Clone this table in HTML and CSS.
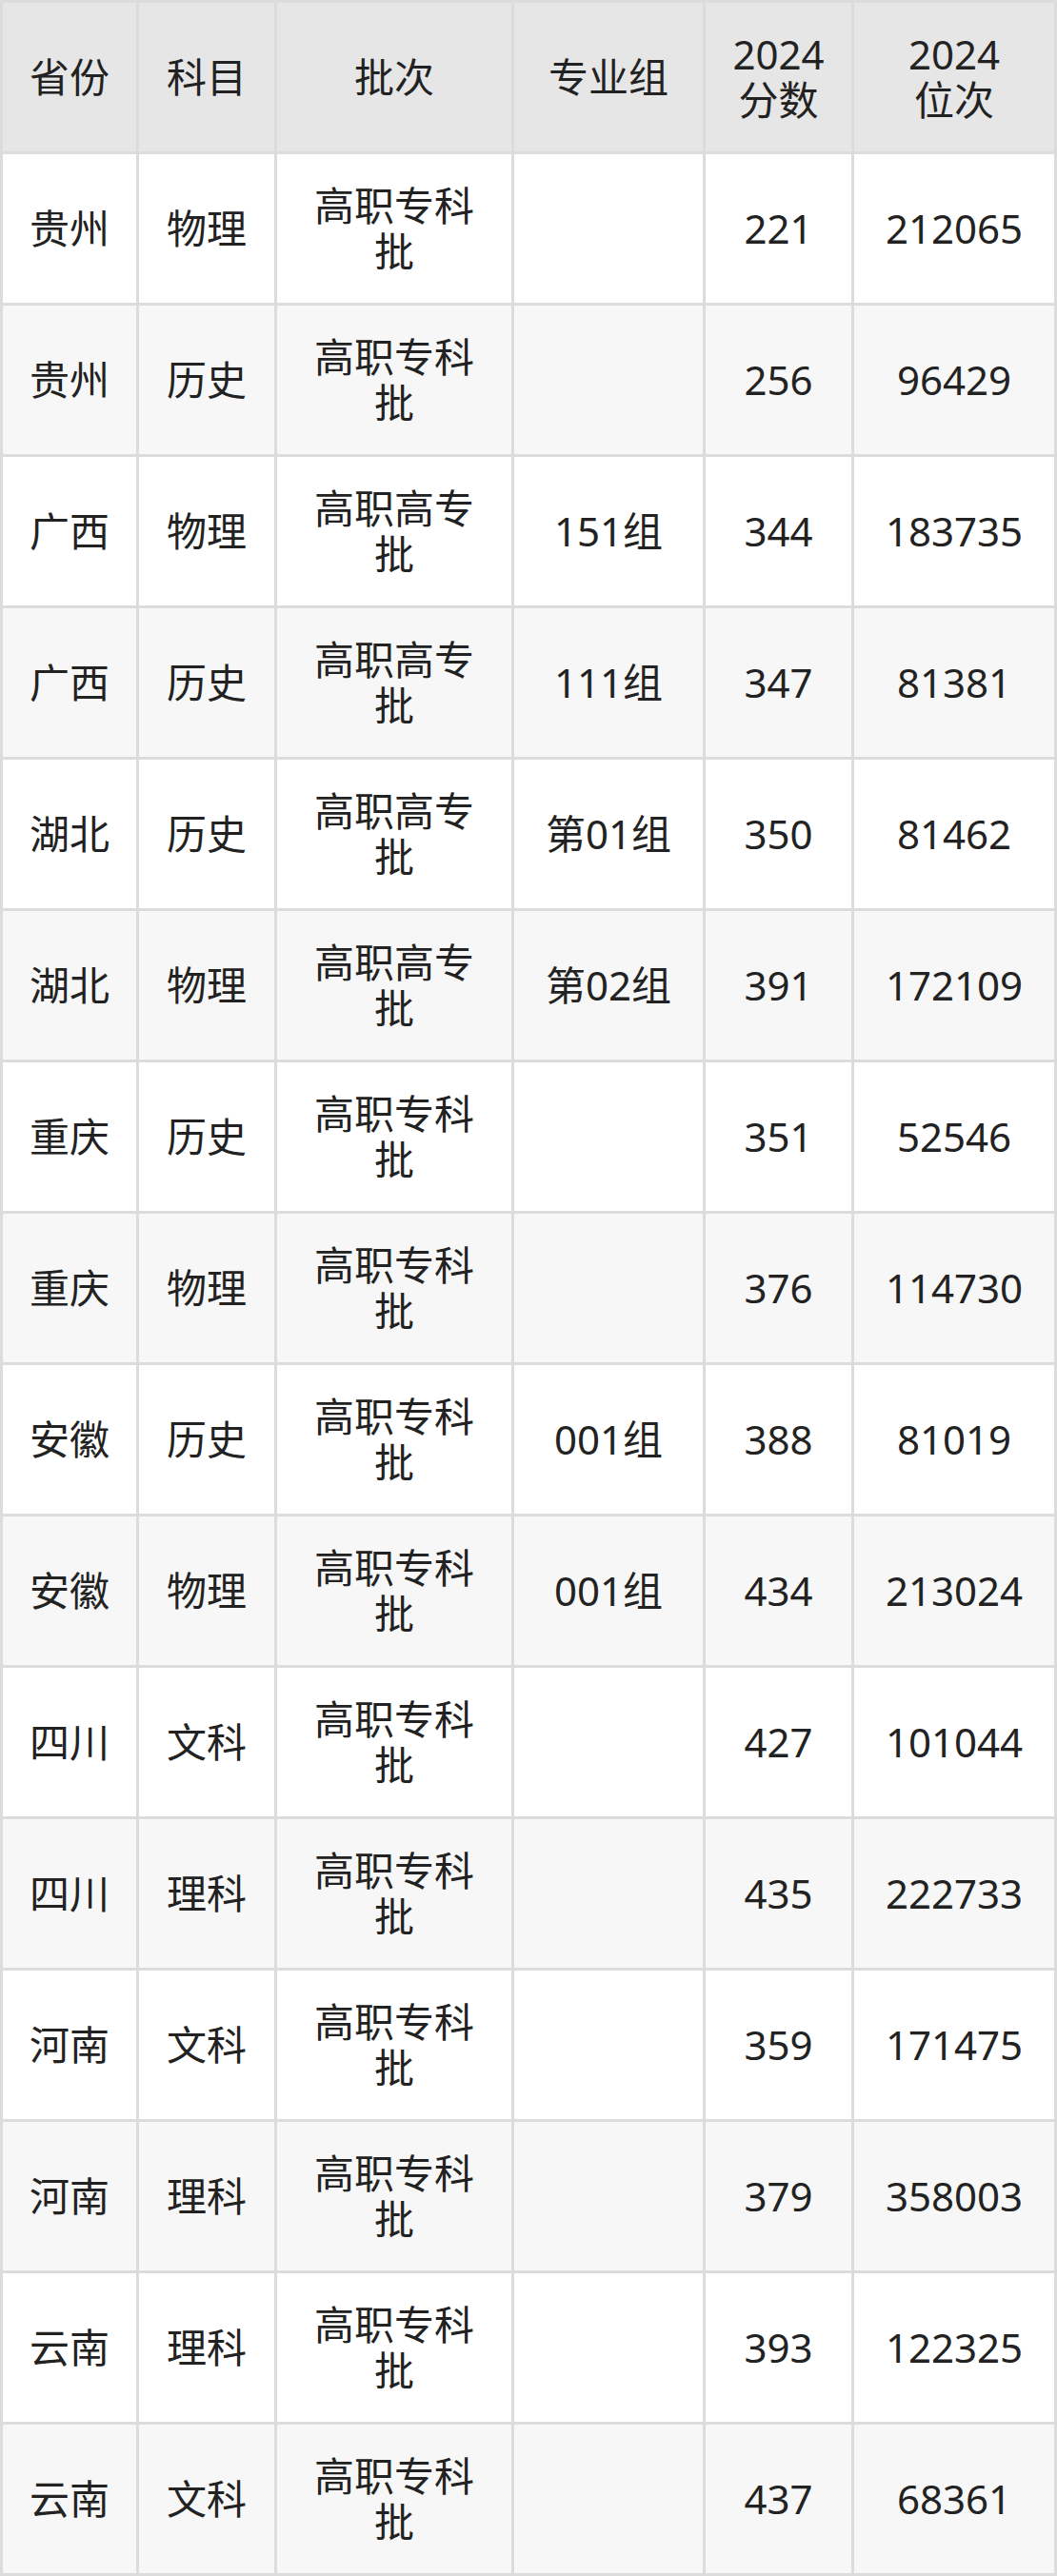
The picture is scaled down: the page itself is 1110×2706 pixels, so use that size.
FILE: index.html
```html
<!DOCTYPE html>
<html lang="zh-CN">
<head>
<meta charset="utf-8">
<title>2024 高职专科批分数</title>
<link rel="stylesheet" href="styles.css">
</head>
<body>
<div class="sheet">
  <div class="cell head">省份</div><div class="cell head">科目</div><div class="cell head">批次</div><div class="cell head">专业组</div><div class="cell head"><span class="stack">2024分数</span></div><div class="cell head"><span class="stack">2024位次</span></div>

  <div class="cell">贵州</div><div class="cell">物理</div><div class="cell">高职专科批</div><div class="cell"></div><div class="cell">221</div><div class="cell">212065</div>
  <div class="cell alt">贵州</div><div class="cell alt">历史</div><div class="cell alt">高职专科批</div><div class="cell alt"></div><div class="cell alt">256</div><div class="cell alt">96429</div>
  <div class="cell">广西</div><div class="cell">物理</div><div class="cell">高职高专批</div><div class="cell">151组</div><div class="cell">344</div><div class="cell">183735</div>
  <div class="cell alt">广西</div><div class="cell alt">历史</div><div class="cell alt">高职高专批</div><div class="cell alt">111组</div><div class="cell alt">347</div><div class="cell alt">81381</div>
  <div class="cell">湖北</div><div class="cell">历史</div><div class="cell">高职高专批</div><div class="cell">第01组</div><div class="cell">350</div><div class="cell">81462</div>
  <div class="cell alt">湖北</div><div class="cell alt">物理</div><div class="cell alt">高职高专批</div><div class="cell alt">第02组</div><div class="cell alt">391</div><div class="cell alt">172109</div>
  <div class="cell">重庆</div><div class="cell">历史</div><div class="cell">高职专科批</div><div class="cell"></div><div class="cell">351</div><div class="cell">52546</div>
  <div class="cell alt">重庆</div><div class="cell alt">物理</div><div class="cell alt">高职专科批</div><div class="cell alt"></div><div class="cell alt">376</div><div class="cell alt">114730</div>
  <div class="cell">安徽</div><div class="cell">历史</div><div class="cell">高职专科批</div><div class="cell">001组</div><div class="cell">388</div><div class="cell">81019</div>
  <div class="cell alt">安徽</div><div class="cell alt">物理</div><div class="cell alt">高职专科批</div><div class="cell alt">001组</div><div class="cell alt">434</div><div class="cell alt">213024</div>
  <div class="cell">四川</div><div class="cell">文科</div><div class="cell">高职专科批</div><div class="cell"></div><div class="cell">427</div><div class="cell">101044</div>
  <div class="cell alt">四川</div><div class="cell alt">理科</div><div class="cell alt">高职专科批</div><div class="cell alt"></div><div class="cell alt">435</div><div class="cell alt">222733</div>
  <div class="cell">河南</div><div class="cell">文科</div><div class="cell">高职专科批</div><div class="cell"></div><div class="cell">359</div><div class="cell">171475</div>
  <div class="cell alt">河南</div><div class="cell alt">理科</div><div class="cell alt">高职专科批</div><div class="cell alt"></div><div class="cell alt">379</div><div class="cell alt">358003</div>
  <div class="cell">云南</div><div class="cell">理科</div><div class="cell">高职专科批</div><div class="cell"></div><div class="cell">393</div><div class="cell">122325</div>
  <div class="cell alt">云南</div><div class="cell alt">文科</div><div class="cell alt">高职专科批</div><div class="cell alt"></div><div class="cell alt">437</div><div class="cell alt">68361</div>
</div>
</body>
</html>
```

FILE: styles.css
```css
html, body {
  margin: 0;
  padding: 0;
  background: #ffffff;
}

.sheet {
  box-sizing: border-box;
  width: 1110px;
  display: grid;
  grid-template-columns: 140px 142px 246px 198px 153px 210px;
  grid-auto-rows: 156px;
  gap: 3px;
  padding: 3px;
  background: #dcdcdc;
  font-family: "Noto Sans", "Noto Sans CJK SC", sans-serif;
  font-size: 42px;
  line-height: 48px;
  color: #222222;
}

.cell {
  display: flex;
  align-items: center;
  justify-content: center;
  text-align: center;
  padding: 0 24px;
  background: #ffffff;
  overflow: hidden;
}

.cell.alt {
  background: #f7f7f7;
}

.cell.head {
  background: #e6e6e6;
}

.stack {
  display: block;
  max-width: 105px;
}
```
